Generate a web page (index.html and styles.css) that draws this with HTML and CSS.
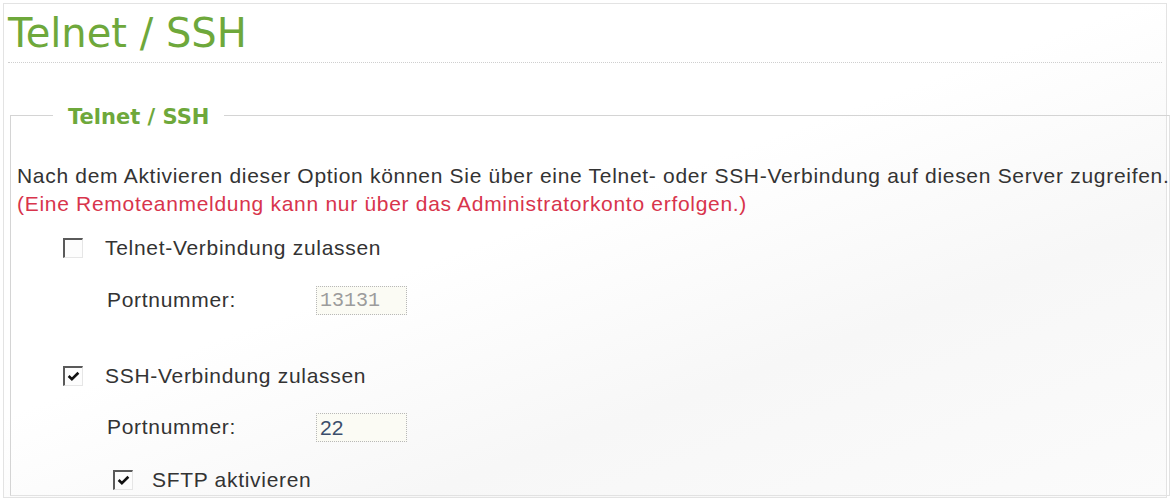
FILE: index.html
```html
<!DOCTYPE html>
<html lang="de">
<head>
<meta charset="utf-8">
<title>Telnet / SSH</title>
<link rel="stylesheet" href="styles.css">
</head>
<body>
<div class="frame">
  <h1 class="title">Telnet / SSH</h1>
  <fieldset class="group">
    <legend class="group-legend">Telnet / SSH</legend>
    <p class="info">Nach dem Aktivieren dieser Option können Sie über eine Telnet- oder SSH-Verbindung auf diesen Server zugreifen.<br><span class="warn">(Eine Remoteanmeldung kann nur über das Administratorkonto erfolgen.)</span></p>

    <div class="row row-check row-telnet">
      <span class="cb"></span>
      <span class="label">Telnet-Verbindung zulassen</span>
    </div>
    <div class="row row-port row-port1">
      <span class="port-label">Portnummer:</span>
      <span class="input input-disabled">13131</span>
    </div>

    <div class="row row-check row-ssh">
      <span class="cb"><svg viewBox="0 0 12 10" class="tick"><path d="M1.5 4.5 L4.5 7.5 L10.5 1.5" /></svg></span>
      <span class="label">SSH-Verbindung zulassen</span>
    </div>
    <div class="row row-port row-port2">
      <span class="port-label">Portnummer:</span>
      <span class="input input-active">22</span>
    </div>

    <div class="row row-sub row-sftp">
      <span class="cb"><svg viewBox="0 0 12 10" class="tick"><path d="M1.5 4.5 L4.5 7.5 L10.5 1.5" /></svg></span>
      <span class="label">SFTP aktivieren</span>
    </div>
  </fieldset>
</div>
</body>
</html>
```
FILE: styles.css
```css
html, body {
  margin: 0;
  padding: 0;
  background: #ffffff;
}
body {
  width: 1171px;
  height: 501px;
  overflow: hidden;
  font-family: "Liberation Sans", Arial, sans-serif;
}
.frame {
  box-sizing: border-box;
  margin: 3px 0 0 3px;
  width: 1164px;
  height: 495px;
  border: 1px solid #e3e3e3;
  padding: 7px 0 0 4px;
  background: linear-gradient(160deg, #ffffff 0%, #ffffff 45%, #f7f7f7 70%, #fbfbfb 100%);
}
.title {
  margin: 0 4px 0 0;
  font-family: "DejaVu Sans", sans-serif;
  font-weight: normal;
  font-size: 40px;
  line-height: 45px;
  color: #6ea83b;
  padding-bottom: 6px;
  border-bottom: 1px dotted #cfcfcf;
}
.group {
  box-sizing: border-box;
  margin: 40px 0 0 2px;
  height: 393px;
  padding: 0 0 0 6px;
  border: 1px solid #d4d4d4;
  border-bottom-color: #e2e2e2;
  border-right-color: #e2e2e2;
}
.group-legend {
  margin-left: 36px;
  padding: 4px 15px 0 15px;
  font-family: "DejaVu Sans", sans-serif;
  font-weight: bold;
  font-size: 21px;
  line-height: 20px;
  color: #6ea83b;
}
.info {
  margin: 35px 0 0 0;
  font-size: 21px;
  line-height: 28px;
  color: #333333;
  letter-spacing: 0.7px;
  white-space: nowrap;
}
.warn {
  color: #d8344c;
}
.row {
  display: flex;
  align-items: center;
  height: 28px;
  font-size: 21px;
  line-height: 28px;
  color: #333333;
  letter-spacing: 0.7px;
}
.row-check {
  padding-left: 46px;
}
.row-telnet {
  margin-top: 16px;
}
.row-port1 {
  margin-top: 24px;
}
.row-ssh {
  margin-top: 48px;
}
.row-port2 {
  margin-top: 23px;
}
.row-sftp {
  margin-top: 25px;
  padding-left: 96px;
}
.cb {
  box-sizing: border-box;
  flex: none;
  width: 20px;
  height: 20px;
  border-top: 2px solid #5a5a5a;
  border-left: 2px solid #5a5a5a;
  border-right: 1px solid #e6e6e6;
  border-bottom: 1px solid #e6e6e6;
  background: #fdfdfd;
  margin-right: 22px;
  display: flex;
  align-items: center;
  justify-content: center;
}
.row-sftp .cb {
  margin-right: 19px;
}
.tick {
  width: 13px;
  height: 11px;
  fill: none;
  stroke: #111111;
  stroke-width: 2.4;
}
.row-port {
  padding-left: 90px;
}
.port-label {
  width: 209px;
  flex: none;
}
.input {
  box-sizing: border-box;
  width: 91px;
  height: 29px;
  border: 1px dotted #b8b8b8;
  background: #fbfbf4;
  padding-left: 3px;
  line-height: 27px;
  letter-spacing: 0;
}
.input-disabled {
  font-family: "Liberation Mono", "Courier New", monospace;
  font-size: 20px;
  color: #9c9c9c;
}
.input-active {
  font-family: "Liberation Sans", Arial, sans-serif;
  font-size: 21px;
  color: #3b4e6b;
}
```
